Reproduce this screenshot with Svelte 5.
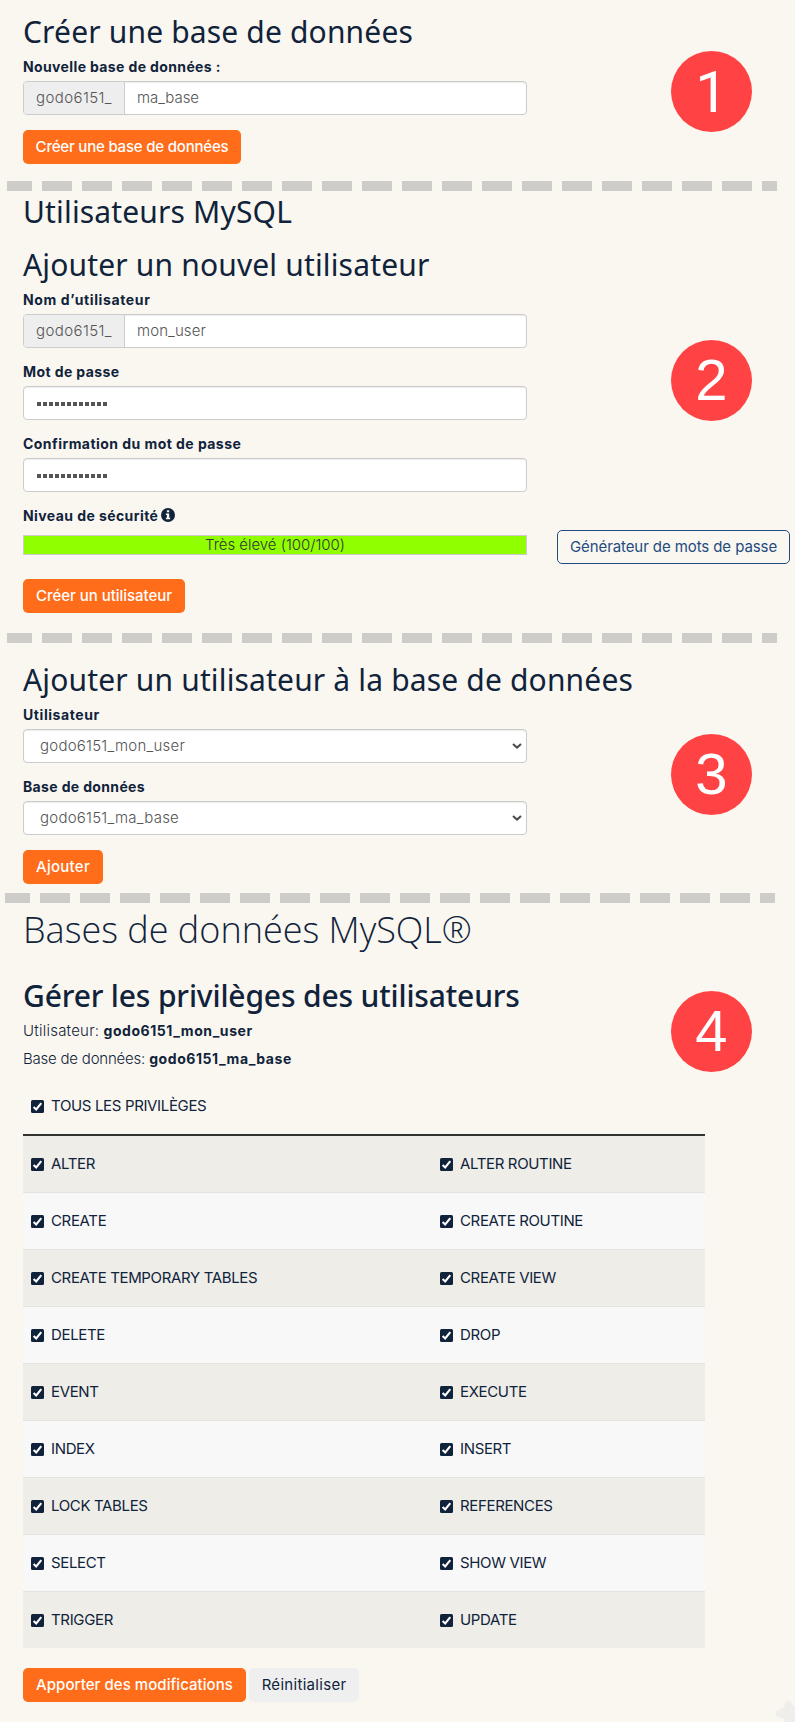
<script>
  const privileges = [
    ['ALTER', 'ALTER ROUTINE'],
    ['CREATE', 'CREATE ROUTINE'],
    ['CREATE TEMPORARY TABLES', 'CREATE VIEW'],
    ['DELETE', 'DROP'],
    ['EVENT', 'EXECUTE'],
    ['INDEX', 'INSERT'],
    ['LOCK TABLES', 'REFERENCES'],
    ['SELECT', 'SHOW VIEW'],
    ['TRIGGER', 'UPDATE']
  ];
</script>

{#snippet t(text, tracking)}<span style:letter-spacing="{tracking}px">{text}</span>{/snippet}

{#snippet check(text)}
  <div class="check">
    <svg width="13" height="13" viewBox="0 0 13 13">
      <rect width="13" height="13" rx="1.5" fill="#10233b" />
      <path d="M2.6 7 5.2 9.5 10.3 3.2" fill="none" stroke="#fff" stroke-width="2.1" />
    </svg>
    <span>{text}</span>
  </div>
{/snippet}

{#snippet prefixed(value, tracking)}
  <div class="input group">
    <div class="addon">{@render t('godo6151_', 0.41)}</div>
    <div class="value">{@render t(value, tracking)}</div>
  </div>
{/snippet}

{#snippet password()}
  <div class="input dots">{#each Array(12) as _}<i></i>{/each}</div>
{/snippet}

{#snippet select(value)}
  <div class="input select">
    {@render t(value, 0.24)}
    <svg width="10" height="6" viewBox="0 0 10 6"><path d="M1 1 5 4.6 9 1" fill="none" stroke="#4c4c4c" stroke-width="2" /></svg>
  </div>
{/snippet}

<main>
  <section>
    <h2 class="first">Créer une base de données</h2>
    <div class="label">{@render t('Nouvelle base de données :', 0.37)}</div>
    {@render prefixed('ma_base', -0.06)}
    <button class="primary w218">{@render t('Créer une base de données', -0.2)}</button>
    <b class="badge one">1</b>
  </section>
  <div class="dash d1"></div>

  <section>
    <h2 class="users">Utilisateurs MySQL</h2>
    <h2 class="new-user">Ajouter un nouvel utilisateur</h2>
    <div class="label">{@render t('Nom d’utilisateur', 0.62)}</div>
    {@render prefixed('mon_user', 0.1)}
    <div class="label next">{@render t('Mot de passe', 0.4)}</div>
    {@render password()}
    <div class="label next">{@render t('Confirmation du mot de passe', 0.45)}</div>
    {@render password()}
    <div class="label next level">
      {@render t('Niveau de sécurité', 0.42)}
      <svg width="14" height="14" viewBox="0 0 14 14">
        <circle cx="7" cy="7" r="7" fill="#10233b" />
        <path d="M5.9 2.3h2.3v1.9H5.9zM4.9 5.5h3.3v4.2h1v1.6H4.9V9.7h1V7.1h-1z" fill="#faf7f0" />
      </svg>
    </div>
    <div class="strength">
      <div class="bar">{@render t('Très élevé (100/100)', -0.03)}</div>
      <button class="outline">{@render t('Générateur de mots de passe', -0.09)}</button>
    </div>
    <button class="primary create-user">{@render t('Créer un utilisateur', -0.03)}</button>
    <b class="badge two">2</b>
  </section>
  <div class="dash d2"></div>

  <section>
    <h2 class="assign">Ajouter un utilisateur à la base de données</h2>
    <div class="label">{@render t('Utilisateur', 0.57)}</div>
    {@render select('godo6151_mon_user')}
    <div class="label next">{@render t('Base de données', 0.35)}</div>
    {@render select('godo6151_ma_base')}
    <button class="primary w80">{@render t('Ajouter', 0.28)}</button>
    <b class="badge three">3</b>
  </section>
  <div class="dash d3"></div>

  <section>
    <h1>Bases de données MySQL®</h1>
    <h2 class="manage">Gérer les privilèges des utilisateurs</h2>
    <p>{@render t('Utilisateur:', 0.23)} <strong>godo6151_mon_user</strong></p>
    <p>{@render t('Base de données:', -0.22)} <strong>godo6151_ma_base</strong></p>
    <div class="table">
      <div class="row head">{@render check('TOUS LES PRIVILÈGES')}</div>
      {#each privileges as [left, right]}
        <div class="row">
          {@render check(left)}
          {@render check(right)}
        </div>
      {/each}
    </div>
    <div class="actions">
      <button class="primary w223">{@render t('Apporter des modifications', 0.06)}</button>
      <button class="reset">{@render t('Réinitialiser', 0.3)}</button>
    </div>
    <b class="badge four">4</b>
  </section>
  <svg class="mark" width="19" height="22" viewBox="0 0 19 22">
    <path d="M0 11 8 7.5 10 1.5 13 0 16 4 19 8V22H8V19L0 16z" fill="#efeeea" />
  </svg>
</main>

<style>
  :global(body) { background: #faf7f0; }
  main {
    position: relative;
    width: 795px;
    height: 1722px;
    overflow: hidden;
    background: #faf7f0;
    color: #10233b;
    font: 300 15px/20px Inter, sans-serif;
    white-space: nowrap;
  }
  section { padding-left: 23px; display: flex; flex-direction: column; align-items: flex-start; }
  h1, h2, p { margin: 0; }
  h2 { font: 400 30px/36px "Noto Sans", sans-serif; letter-spacing: 0.16px; margin-bottom: 7px; }
  h1 { font: 300 36px/44px "Open Sans", sans-serif; margin: 5px 0 26px; }
  .first { margin-top: 14px; }
  .users { margin: 3px 0 17px; }
  .assign { margin-top: 19px; }
  .manage { font-weight: 500; letter-spacing: -0.16px; }
  .label { font-size: 14px; font-weight: 700; height: 20px; margin-bottom: 4px; }
  .next { margin-top: 14px; }
  .level { display: flex; align-items: center; gap: 2.5px; margin-bottom: 9px; }
  .level svg { position: relative; top: -1px; }
  .input {
    box-sizing: border-box;
    width: 504px;
    height: 34px;
    border: 1px solid #ccc;
    border-radius: 4px;
    background: #fff;
    color: #555;
    display: flex;
    align-items: center;
    box-shadow: inset 0 1px 1px rgba(0, 0, 0, 0.075);
  }
  .group { align-items: stretch; line-height: 32px; overflow: hidden; }
  .addon { box-sizing: border-box; width: 101px; padding-left: 12px; background: #eee; border-right: 1px solid #ccc; }
  .value { padding-left: 12px; }
  .dots { gap: 2px; padding: 2px 0 0 13px; }
  .dots i { width: 4px; height: 4px; background: #555; }
  .select { justify-content: space-between; padding: 0 4px 0 16px; }
  button {
    box-sizing: border-box;
    height: 34px;
    padding: 0;
    border: 0;
    border-radius: 5px;
    font: 500 15px/32px Inter, sans-serif;
    color: #10233b;
    white-space: nowrap;
  }
  .primary { background: #ff6c1a; color: #fff; margin-top: 15px; }
  .w218 { width: 218px; }
  .w80 { width: 80px; }
  .w223 { width: 223px; }
  .create-user { width: 162px; margin-top: 24px; }
  .strength { display: flex; align-items: center; gap: 30px; height: 20px; }
  .bar {
    box-sizing: border-box;
    width: 504px;
    height: 20px;
    border: 1px solid #ccc;
    background: #90ff00;
    color: #333;
    text-align: center;
    line-height: 18px;
  }
  .outline { width: 233px; border: 1px solid #234b80; background: transparent; color: #234b80; font-weight: 400; margin-top: 4px; }
  .dash {
    width: 770px;
    height: 10px;
    background: repeating-linear-gradient(90deg, #cecdc9 0 30px, transparent 30px 40px) -5px 0 / 800px 10px;
  }
  .d1 { margin: 17px 0 0 7px; }
  .d2 { margin: 20px 0 0 7px; }
  .d3 { margin: 9px 0 0 5px; }
  .badge {
    position: absolute;
    left: 671px;
    width: 81px;
    height: 81px;
    border-radius: 50%;
    background: #ff4344;
    color: #fff;
    font: 400 58px/79px "Liberation Sans", sans-serif;
    text-align: center;
  }
  .one { top: 51px; font-family: Roboto, sans-serif; line-height: 82px; }
  .two { top: 340px; }
  .three { top: 734px; }
  .four { top: 991px; }
  p + p { margin-top: 8px; }
  strong { font-size: 14px; font-weight: 700; letter-spacing: 0.56px; }
  .table { width: 682px; margin-top: 8px; }
  .row {
    display: grid;
    grid-template-columns: 409px 1fr;
    align-items: center;
    height: 56px;
    background: #eeede8;
    border-top: 1px solid #e4e3df;
  }
  .row:nth-child(odd) { background: #f8f8f8; }
  .row.head { height: 57px; background: none; border: 0; }
  .head + .row { border-top: 2px solid #333430; }
  .check { display: flex; align-items: center; gap: 7px; padding-left: 8px; font-weight: 400; letter-spacing: -0.35px; }
  .check svg { position: relative; top: 0.5px; }
  .actions { display: flex; gap: 3px; margin-top: 20px; }
  .actions button { margin: 0; }
  .reset { width: 110px; background: #efefef; font-weight: 400; }
  .mark { position: absolute; right: 0; bottom: 0; }
</style>
